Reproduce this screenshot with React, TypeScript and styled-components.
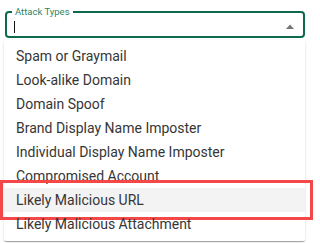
import styled, { createGlobalStyle } from "styled-components";

const GlobalStyle = createGlobalStyle`
  html, body {
    margin: 0;
    padding: 0;
    background: #ffffff;
    font-family: Roboto, "Liberation Sans", sans-serif;
  }
`;

const ATTACK_TYPES = [
  "Spam or Graymail",
  "Look-alike Domain",
  "Domain Spoof",
  "Brand Display Name Imposter",
  "Individual Display Name Imposter",
  "Compromised Account",
  "Likely Malicious URL",
  "Likely Malicious Attachment",
];

const HIGHLIGHTED = "Likely Malicious URL";

const App = () => {
  return (
    <Page>
      <GlobalStyle />
      <Field>
        <Label>Attack Types</Label>
        <InputRow>
          <Caret />
          <ArrowIcon viewBox="0 0 8 5">
            <polygon points="0,5 4,0.6 8,5" />
          </ArrowIcon>
        </InputRow>
      </Field>
      <Menu>
        {ATTACK_TYPES.map((item) => (
          <Option key={item} $active={item === HIGHLIGHTED}>
            {item}
            {item === HIGHLIGHTED && <Callout />}
          </Option>
        ))}
      </Menu>
    </Page>
  );
};

const Page = styled.div`
  width: 313px;
  height: 243px;
  box-sizing: border-box;
  padding: 7px 8px 0 5px;
  overflow: hidden;
`;

const Field = styled.fieldset`
  margin: 0;
  padding: 0 9px 0 7px;
  border: 2px solid #0d6a4e;
  border-radius: 4px;
  min-width: 0;
`;

const Label = styled.legend`
  margin-left: -2px;
  padding: 0 3px;
  font-size: 9.5px;
  line-height: 10px;
  color: #2f8466;
`;

const InputRow = styled.div`
  display: flex;
  align-items: center;
  justify-content: space-between;
  height: 19px;
`;

const Caret = styled.span`
  display: block;
  width: 1px;
  height: 12px;
  background: #111111;
`;

const ArrowIcon = styled.svg`
  width: 8px;
  height: 5px;
  margin-top: -1px;
  fill: #757575;
`;

const Menu = styled.div`
  margin: 2px 0 0 -1px;
  padding: 4px 0 5px;
  background: #ffffff;
  border-radius: 2px;
  box-shadow: 0 2px 1px -1px rgba(0, 0, 0, 0.2), 0 1px 1px rgba(0, 0, 0, 0.14),
    0 1px 3px rgba(0, 0, 0, 0.12);
`;

const Option = styled.div<{ $active?: boolean }>`
  position: relative;
  height: 24px;
  padding-left: 12px;
  font-size: 14px;
  line-height: 25px;
  color: #363636;
  white-space: nowrap;
  background: ${({ $active }) => ($active ? "#f3f3f3" : "transparent")};
`;

const Callout = styled.span`
  position: absolute;
  top: -8px;
  bottom: -8px;
  left: -4px;
  right: -8px;
  border: 3px solid #f44848;
  pointer-events: none;
`;

export default App;
